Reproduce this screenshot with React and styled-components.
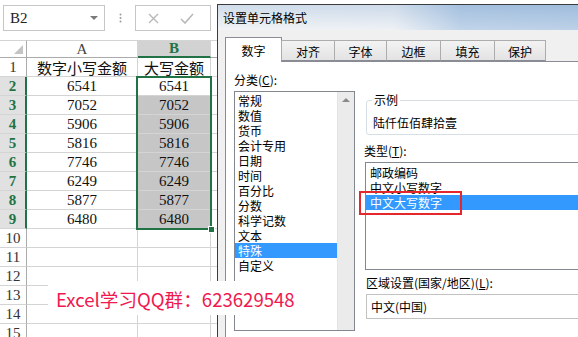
import React from "react";
import styled, { createGlobalStyle } from "styled-components";

const GREEN = "#217346";
const CJK = `"Noto Sans CJK SC", "Noto Sans", sans-serif`;
const SHEET_FONT = `"Liberation Serif", "Noto Sans CJK SC", serif`;

const GlobalStyle = createGlobalStyle`
  html, body {
    margin: 0;
    padding: 0;
    background: #fff;
    overflow: hidden;
  }
  * { box-sizing: border-box; }
`;

const Screen = styled.div`
  position: relative;
  width: 578px;
  height: 337px;
  overflow: hidden;
  background: #fff;
`;

/* ---------- Excel sheet ---------- */

const Sheet = styled.div`
  display: flex;
  flex-direction: column;
`;

const FormulaBar = styled.div`
  display: flex;
  align-items: flex-start;
  height: 40px;
  padding: 5px 0 0 3px;
`;

const NameBox = styled.div`
  display: flex;
  align-items: center;
  justify-content: space-between;
  width: 102px;
  height: 26px;
  padding: 0 6px 0 6px;
  border: 1px solid #c6c6c6;
  font: 15px ${SHEET_FONT};
  color: #222;
`;

const Caret = styled.span`
  width: 0;
  height: 0;
  border-left: 4px solid transparent;
  border-right: 4px solid transparent;
  border-top: 4px solid #7a7a7a;
`;

const Grip = styled.div`
  display: flex;
  align-items: center;
  justify-content: center;
  width: 30px;
  height: 26px;
`;

const FxBox = styled.div`
  display: flex;
  align-items: center;
  gap: 21px;
  width: 76px;
  height: 26px;
  padding-left: 12px;
  border: 1px solid #c6c6c6;
`;

const Grid = styled.div`
  position: relative;
  display: grid;
  grid-template-columns: 27px 111px 73px 1fr;
  grid-auto-rows: 19px;
  grid-template-rows: 18px;
`;

const Corner = styled.div`
  position: relative;
  border-right: 1px solid #ababab;
  border-bottom: 1px solid #ababab;
  border-top: 1px solid #d4d4d4;
  &::after {
    content: "";
    position: absolute;
    right: 3px;
    bottom: 3px;
    border-left: 9px solid transparent;
    border-bottom: 9px solid #c4c4c4;
  }
`;

const ColHead = styled.div`
  display: flex;
  align-items: center;
  justify-content: center;
  border-top: 1px solid #d4d4d4;
  border-right: 1px solid #d4d4d4;
  border-bottom: ${(p) => (p.$active ? `2px solid ${GREEN}` : "1px solid #ababab")};
  background: ${(p) => (p.$active ? "#d2d2d2" : "#fff")};
  color: ${(p) => (p.$active ? GREEN : "#444")};
  font: ${(p) => (p.$active ? "bold" : "normal")} 15px ${SHEET_FONT};
`;

const RowHead = styled.div`
  display: flex;
  align-items: center;
  justify-content: center;
  border-bottom: 1px solid #d4d4d4;
  border-right: ${(p) => (p.$active ? `2px solid ${GREEN}` : "1px solid #ababab")};
  background: ${(p) => (p.$active ? "#e1e1e1" : "#fff")};
  color: ${(p) => (p.$active ? GREEN : "#333")};
  font: ${(p) => (p.$active ? "bold" : "normal")} 15px ${SHEET_FONT};
`;

const Cell = styled.div`
  display: flex;
  align-items: center;
  justify-content: center;
  border-right: 1px solid #d4d4d4;
  border-bottom: 1px solid #d4d4d4;
  background: ${(p) => (p.$shade ? "#c6c6c6" : "#fff")};
  color: #111;
  font: 15px ${SHEET_FONT};
  white-space: nowrap;
  overflow: hidden;
`;

const Selection = styled.div`
  position: absolute;
  left: 136px;
  top: 36px;
  width: 76px;
  height: 154px;
  border: 2px solid ${GREEN};
  pointer-events: none;
`;

const FillHandle = styled.div`
  position: absolute;
  right: -5px;
  bottom: -5px;
  width: 7px;
  height: 7px;
  background: ${GREEN};
  border: 1px solid #fff;
`;

/* ---------- Format Cells dialog ---------- */

const Dialog = styled.div`
  position: absolute;
  left: 217px;
  top: 4px;
  width: 420px;
  height: 360px;
  border: 1px solid #3c3c3c;
  background: #f0f0f0;
  font: 12px ${CJK};
  color: #000;
`;

const TitleBar = styled.div`
  display: flex;
  align-items: center;
  height: 25px;
  padding-left: 5px;
  background:
    linear-gradient(to bottom, rgba(120, 160, 205, 0.25), rgba(255, 255, 255, 0.2)),
    linear-gradient(to right, #eef1f4 0, #eaeef3 42%, #b2cae4 58%, #aac4e1 100%);
  font-size: 12px;
`;

const Body = styled.div`
  padding: 7px 0 0 7px;
`;

const TabBar = styled.div`
  display: flex;
  align-items: flex-end;
  height: 24px;
  position: relative;
  z-index: 1;
`;

const Tab = styled.div`
  display: flex;
  align-items: center;
  justify-content: center;
  width: ${(p) => p.$w}px;
  height: ${(p) => (p.$active ? 25 : 21)}px;
  margin-bottom: ${(p) => (p.$active ? -1 : 0)}px;
  padding-top: ${(p) => (p.$active ? 1 : 2)}px;
  border: 1px solid ${(p) => (p.$active ? "#898c95" : "#acacac")};
  border-bottom: ${(p) => (p.$active ? "none" : "1px solid #898c95")};
  margin-right: -1px;
  background: ${(p) => (p.$active ? "#fff" : "linear-gradient(#f3f3f3, #e3e3e3)")};
`;

const Panel = styled.div`
  display: flex;
  height: 320px;
  padding: 11px 0 0 8px;
  background: #fff;
  border: 1px solid #898c95;
`;

const LeftCol = styled.div`
  display: flex;
  flex-direction: column;
  width: 121px;
`;

const FieldLabel = styled.div`
  height: 14px;
  line-height: 14px;
  margin-top: ${(p) => p.$mt || 0}px;
  margin-left: ${(p) => p.$ml || 0}px;
  white-space: nowrap;
`;

const CategoryBox = styled.div`
  display: flex;
  height: 240px;
  margin-top: 4px;
  border: 1px solid #828790;
`;

const Items = styled.div`
  flex: 1;
  padding-top: 1px;
`;

const Item = styled.div`
  height: 15px;
  line-height: 15px;
  padding-left: ${(p) => p.$pl || 2}px;
  background: ${(p) => (p.$selected ? "#3399ff" : "transparent")};
  color: ${(p) => (p.$selected ? "#fff" : "#000")};
  white-space: nowrap;
`;

const ScrollTrack = styled.div`
  display: flex;
  justify-content: center;
  width: 17px;
  background: #ebebeb;
  border-left: 1px solid #e4e4e4;
  padding-top: 6px;
`;

const UpArrow = styled.span`
  width: 0;
  height: 0;
  border-left: 4px solid transparent;
  border-right: 4px solid transparent;
  border-bottom: 4px solid #8a8a8a;
`;

const RightCol = styled.div`
  display: flex;
  flex-direction: column;
  width: 260px;
  margin-left: 9px;
`;

const GroupBox = styled.fieldset`
  margin: 20px 0 0 2px;
  padding: 9px 5px 4px;
  border: 1px solid #d5dfe5;
  border-radius: 3px;
  min-width: 0;
`;

const Legend = styled.legend`
  padding: 0 2px;
  line-height: 14px;
  font-size: 12px;
`;

const Sample = styled.div`
  height: 14px;
  line-height: 14px;
  padding-left: 1px;
`;

const TypeWrap = styled.div`
  position: relative;
  margin: 4px 0 0 1px;
`;

const TypeBox = styled.div`
  height: 108px;
  padding-top: 2px;
  border: 1px solid #828790;
`;

const Highlight = styled.div`
  position: absolute;
  left: -6px;
  top: 29px;
  width: 103px;
  height: 24px;
  border: 2px solid #e5262d;
  pointer-events: none;
`;

const Combo = styled.div`
  display: flex;
  align-items: center;
  height: 25px;
  margin: 4px 0 0 2px;
  padding-left: 4px;
  border: 1px solid #c2c2c2;
`;

/* ---------- watermark ---------- */

const Watermark = styled.div`
  position: absolute;
  left: 48px;
  top: 281px;
  width: 254px;
  height: 34px;
  display: flex;
  align-items: center;
  padding-left: 8px;
  background: #fff;
  color: #f0184e;
  font: 18.6px ${CJK};
  white-space: nowrap;
`;

const values = [6541, 7052, 5906, 5816, 7746, 6249, 5877, 6480];
const categories = [
  "常规", "数值", "货币", "会计专用", "日期", "时间",
  "百分比", "分数", "科学记数", "文本", "特殊", "自定义",
];
const types = ["邮政编码", "中文小写数字", "中文大写数字"];
const tabs = [
  { label: "数字", w: 57 },
  { label: "对齐", w: 54 },
  { label: "字体", w: 53 },
  { label: "边框", w: 55 },
  { label: "填充", w: 55 },
  { label: "保护", w: 52 },
];

function Cross() {
  return (
    <svg width="11" height="11" viewBox="0 0 11 11">
      <path d="M1 1L10 10M10 1L1 10" stroke="#b8b8b8" strokeWidth="1.4" fill="none" />
    </svg>
  );
}

function Check() {
  return (
    <svg width="14" height="11" viewBox="0 0 14 11">
      <path d="M1 6L5 10L13 1" stroke="#b8b8b8" strokeWidth="1.6" fill="none" />
    </svg>
  );
}

function Dots() {
  return (
    <svg width="3" height="10" viewBox="0 0 3 10">
      <circle cx="1.5" cy="1.5" r="1" fill="#9a9a9a" />
      <circle cx="1.5" cy="5" r="1" fill="#9a9a9a" />
      <circle cx="1.5" cy="8.5" r="1" fill="#9a9a9a" />
    </svg>
  );
}

export default function App() {
  const rows = [];
  rows.push(
    <React.Fragment key="r1">
      <RowHead>1</RowHead>
      <Cell>数字小写金额</Cell>
      <Cell>大写金额</Cell>
      <Cell />
    </React.Fragment>
  );
  values.forEach((v, i) => {
    rows.push(
      <React.Fragment key={"v" + i}>
        <RowHead $active>{i + 2}</RowHead>
        <Cell>{v}</Cell>
        <Cell $shade={i > 0}>{v}</Cell>
        <Cell />
      </React.Fragment>
    );
  });
  for (let n = 10; n <= 15; n++) {
    rows.push(
      <React.Fragment key={"e" + n}>
        <RowHead>{n}</RowHead>
        <Cell />
        <Cell />
        <Cell />
      </React.Fragment>
    );
  }

  return (
    <Screen>
      <GlobalStyle />
      <Sheet>
        <FormulaBar>
          <NameBox>
            B2
            <Caret />
          </NameBox>
          <Grip>
            <Dots />
          </Grip>
          <FxBox>
            <Cross />
            <Check />
          </FxBox>
        </FormulaBar>
        <Grid>
          <Corner />
          <ColHead>A</ColHead>
          <ColHead $active>B</ColHead>
          <ColHead />
          {rows}
          <Selection>
            <FillHandle />
          </Selection>
        </Grid>
      </Sheet>

      <Dialog>
        <TitleBar>设置单元格格式</TitleBar>
        <Body>
          <TabBar>
            {tabs.map((t, i) => (
              <Tab key={t.label} $w={t.w} $active={i === 0}>
                {t.label}
              </Tab>
            ))}
          </TabBar>
          <Panel>
            <LeftCol>
              <FieldLabel>
                分类(<u>C</u>):
              </FieldLabel>
              <CategoryBox>
                <Items>
                  {categories.map((c) => (
                    <Item key={c} $pl={3} $selected={c === "特殊"}>
                      {c}
                    </Item>
                  ))}
                </Items>
                <ScrollTrack>
                  <UpArrow />
                </ScrollTrack>
              </CategoryBox>
            </LeftCol>
            <RightCol>
              <GroupBox>
                <Legend>示例</Legend>
                <Sample>陆仟伍佰肆拾壹</Sample>
              </GroupBox>
              <FieldLabel $mt={9}>
                类型(<u>T</u>):
              </FieldLabel>
              <TypeWrap>
                <TypeBox>
                  {types.map((t) => (
                    <Item key={t} $pl={4} $selected={t === "中文大写数字"}>
                      {t}
                    </Item>
                  ))}
                </TypeBox>
                <Highlight />
              </TypeWrap>
              <FieldLabel $mt={6} $ml={2}>
                区域设置(国家/地区)(<u>L</u>):
              </FieldLabel>
              <Combo>中文(中国)</Combo>
            </RightCol>
          </Panel>
        </Body>
      </Dialog>

      <Watermark>Excel学习QQ群：623629548</Watermark>
    </Screen>
  );
}
